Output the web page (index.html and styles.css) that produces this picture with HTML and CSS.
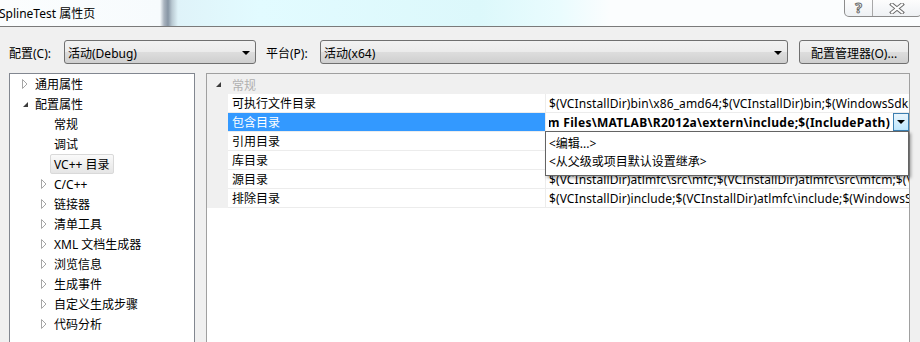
FILE: index.html
```html
<!DOCTYPE html>
<html>
<head>
  <meta charset="utf-8">
  <link rel="stylesheet" href="styles.css">
</head>
<body>
  <div class="titlebar">
    <span class="title">SplineTest 属性页</span>
    <div class="caption-btns">
      <span class="cap cap-help">?</span>
      <span class="cap cap-close">
        <svg width="16" height="11" viewBox="0 0 16 11">
          <path d="M3 1.5L13 9.5M13 1.5L3 9.5" stroke="#6b6b6b" stroke-width="4" stroke-linecap="square"/>
          <path d="M3 1.5L13 9.5M13 1.5L3 9.5" stroke="#fff" stroke-width="2" stroke-linecap="square"/>
        </svg>
      </span>
    </div>
  </div>

  <div class="toolbar">
    <label class="lbl">配置(C):</label>
    <div class="combo combo-config"><span>活动(Debug)</span><i class="arrow"></i></div>
    <label class="lbl lbl-platform">平台(P):</label>
    <div class="combo combo-platform"><span>活动(x64)</span><i class="arrow"></i></div>
    <button type="button" class="btn">配置管理器(O)...</button>
  </div>

  <div class="main">
    <div class="tree">
      <div class="node lvl1">
        <span class="exp"><svg width="6" height="10" viewBox="0 0 6 10"><path d="M0.5 0.5L5 5L0.5 9.5Z" fill="#fff" stroke="#a6a6a6"/></svg></span>
        <span class="text">通用属性</span>
      </div>
      <div class="node lvl1">
        <span class="exp"><svg width="6" height="10" viewBox="0 0 6 10"><path d="M6 3V8H1Z" fill="#3c3c3c"/></svg></span>
        <span class="text">配置属性</span>
      </div>
      <div class="node lvl2"><span class="exp"></span><span class="text">常规</span></div>
      <div class="node lvl2"><span class="exp"></span><span class="text">调试</span></div>
      <div class="node lvl2"><span class="exp"></span><span class="text selected">VC++ 目录</span></div>
      <div class="node lvl2">
        <span class="exp"><svg width="6" height="10" viewBox="0 0 6 10"><path d="M0.5 0.5L5 5L0.5 9.5Z" fill="#fff" stroke="#a6a6a6"/></svg></span>
        <span class="text">C/C++</span>
      </div>
      <div class="node lvl2">
        <span class="exp"><svg width="6" height="10" viewBox="0 0 6 10"><path d="M0.5 0.5L5 5L0.5 9.5Z" fill="#fff" stroke="#a6a6a6"/></svg></span>
        <span class="text">链接器</span>
      </div>
      <div class="node lvl2">
        <span class="exp"><svg width="6" height="10" viewBox="0 0 6 10"><path d="M0.5 0.5L5 5L0.5 9.5Z" fill="#fff" stroke="#a6a6a6"/></svg></span>
        <span class="text">清单工具</span>
      </div>
      <div class="node lvl2">
        <span class="exp"><svg width="6" height="10" viewBox="0 0 6 10"><path d="M0.5 0.5L5 5L0.5 9.5Z" fill="#fff" stroke="#a6a6a6"/></svg></span>
        <span class="text">XML 文档生成器</span>
      </div>
      <div class="node lvl2">
        <span class="exp"><svg width="6" height="10" viewBox="0 0 6 10"><path d="M0.5 0.5L5 5L0.5 9.5Z" fill="#fff" stroke="#a6a6a6"/></svg></span>
        <span class="text">浏览信息</span>
      </div>
      <div class="node lvl2">
        <span class="exp"><svg width="6" height="10" viewBox="0 0 6 10"><path d="M0.5 0.5L5 5L0.5 9.5Z" fill="#fff" stroke="#a6a6a6"/></svg></span>
        <span class="text">生成事件</span>
      </div>
      <div class="node lvl2">
        <span class="exp"><svg width="6" height="10" viewBox="0 0 6 10"><path d="M0.5 0.5L5 5L0.5 9.5Z" fill="#fff" stroke="#a6a6a6"/></svg></span>
        <span class="text">自定义生成步骤</span>
      </div>
      <div class="node lvl2">
        <span class="exp"><svg width="6" height="10" viewBox="0 0 6 10"><path d="M0.5 0.5L5 5L0.5 9.5Z" fill="#fff" stroke="#a6a6a6"/></svg></span>
        <span class="text">代码分析</span>
      </div>
    </div>

    <div class="grid">
      <div class="category">
        <span class="exp"><svg width="6" height="10" viewBox="0 0 6 10"><path d="M6 3V8H1Z" fill="#3c3c3c"/></svg></span>
        <span class="cat-name">常规</span>
      </div>

      <div class="prop">
        <div class="gutter"></div>
        <div class="name">可执行文件目录</div>
        <div class="value">$(VCInstallDir)bin\x86_amd64;$(VCInstallDir)bin;$(WindowsSdkDir)bin\NETFX 4.0 Tools;$(WindowsSdkDir)bin</div>
      </div>
      <div class="prop active">
        <div class="gutter"></div>
        <div class="name">包含目录</div>
        <div class="value">
          <div class="edit"><span>C:\Program Files\MATLAB\R2012a\extern\include;$(IncludePath)</span></div>
          <div class="drop-btn"><i class="arrow"></i></div>
        </div>
      </div>
      <div class="prop">
        <div class="gutter"></div>
        <div class="name">引用目录</div>
        <div class="value">$(VCInstallDir)atlmfc\lib\amd64;$(VCInstallDir)lib\amd64</div>
      </div>
      <div class="prop">
        <div class="gutter"></div>
        <div class="name">库目录</div>
        <div class="value">$(VCInstallDir)lib\amd64;$(VCInstallDir)atlmfc\lib\amd64;$(WindowsSdkDir)lib\x64</div>
      </div>
      <div class="prop">
        <div class="gutter"></div>
        <div class="name">源目录</div>
        <div class="value">$(VCInstallDir)atlmfc\src\mfc;$(VCInstallDir)atlmfc\src\mfcm;$(VCInstallDir)atlmfc\src\atl</div>
      </div>
      <div class="prop">
        <div class="gutter"></div>
        <div class="name">排除目录</div>
        <div class="value">$(VCInstallDir)include;$(VCInstallDir)atlmfc\include;$(WindowsSdkDir)include</div>
      </div>

      <!-- dropdown list of the include row -->
      <div class="popup">
        <div class="item">&lt;编辑...&gt;</div>
        <div class="item">&lt;从父级或项目默认设置继承&gt;</div>
      </div>
    </div>
  </div>
</body>
</html>
```

FILE: styles.css
```css
* {
    box-sizing: border-box;
}

body {
    margin: 0;
    width: 920px;
    height: 342px;
    overflow: hidden;
    background: #f0f0f0;
    font-family: "Segoe UI", "Noto Sans", "Noto Sans CJK SC", sans-serif;
    font-size: 12px;
    color: #000;
}

/* title bar */
.titlebar {
    height: 27px;
    display: flex;
    align-items: flex-start;
    border-bottom: 1px solid #7a7a7a;
    background: linear-gradient(90deg, #fbfdfe 0, #f7fbfd 160px, #aab4bf 164px, #8795a4 168px, #b9c9d2 172px, #dff3f9 178px, #e2fbff 260px, #dcf8fb 480px, #eafcfe 560px, #fbfdfe 610px);
}

.title {
    margin-left: -1px;
    margin-top: 5px;
    line-height: 17px;
}

.caption-btns {
    margin-left: auto;
    margin-right: -2px;
    display: flex;
    height: 17px;
    border: 1px solid #8c8c8c;
    border-top: none;
    border-radius: 0 0 5px 5px;
    background: linear-gradient(#fdfdfd, #eef1f4);
}

.cap {
    display: flex;
    align-items: center;
    justify-content: center;
}

.cap-help {
    width: 28px;
    border-right: 1px solid #a8a8a8;
    font-size: 14px;
    font-weight: bold;
    color: #fff;
    -webkit-text-stroke: 1px #6b6b6b;
    line-height: 16px;
}

.cap-close {
    width: 48px;
}

/* configuration toolbar */
.toolbar {
    display: flex;
    align-items: center;
    height: 24px;
    margin-top: 13px;
    padding-left: 9px;
}

.lbl {
    width: 55px;
    padding-top: 1px;
}

.lbl-platform {
    margin-left: 10px;
    width: 54px;
}

.combo {
    height: 24px;
    display: flex;
    align-items: center;
    padding: 1px 5px 0 3px;
    border: 1px solid #707070;
    border-radius: 3px;
    background: linear-gradient(#f2f2f2 0, #ebebeb 50%, #dddddd 51%, #cfcfcf 100%);
}

.combo span {
    flex: 1;
}

.combo-config {
    width: 192px;
}

.combo-platform {
    width: 468px;
}

.arrow {
    width: 0;
    height: 0;
    border-left: 4px solid transparent;
    border-right: 4px solid transparent;
    border-top: 4px solid #000;
}

.btn {
    margin-left: 11px;
    width: 110px;
    height: 24px;
    padding: 1px 0 0;
    border: 1px solid #707070;
    border-radius: 3px;
    background: linear-gradient(#f2f2f2 0, #ebebeb 50%, #dddddd 51%, #cfcfcf 100%);
    font-family: inherit;
    font-size: 12px;
    color: #000;
}

/* panels */
.main {
    display: flex;
    gap: 11px;
    margin-top: 9px;
    padding-left: 9px;
}

.tree {
    width: 186px;
    height: 300px;
    background: #fff;
    border: 1px solid #828790;
}

.node {
    height: 20px;
    display: flex;
    align-items: center;
}

.lvl1 {
    padding-left: 12px;
}

.lvl2 {
    padding-left: 31px;
}

.exp {
    width: 9px;
    height: 10px;
    display: flex;
}

.text {
    padding: 1px 3px 0;
    height: 20px;
    line-height: 17px;
    border: 1px solid transparent;
    border-radius: 2px;
    white-space: nowrap;
}

.text.selected {
    border-color: #d9d9d9;
    background: linear-gradient(#fafafa, #e5e5e5);
}

/* property grid */
.grid {
    position: relative;
    width: 704px;
    height: 300px;
    background: #fff;
    border: 1px solid #a0a0a0;
}

.category {
    height: 20px;
    display: flex;
    align-items: center;
    padding-left: 8px;
    background: #f0f0f0;
}

.category .exp {
    width: 17px;
}

.cat-name {
    padding-top: 2px;
    color: #b0b0b0;
}

.prop {
    display: flex;
    height: 19px;
}

.gutter {
    width: 21px;
    background: #f0f0f0;
}

.name {
    width: 318px;
    padding: 1px 0 0 4px;
    line-height: 17px;
    border-right: 1px solid #ececec;
    border-bottom: 1px solid #ececec;
    white-space: nowrap;
}

.value {
    width: 363px;
    padding: 1px 0 0 3px;
    line-height: 17px;
    border-bottom: 1px solid #ececec;
    white-space: nowrap;
    overflow: hidden;
    letter-spacing: 0.1px;
}

.prop.active .name {
    background: #3399ff;
    color: #fff;
}

.prop.active .value {
    display: flex;
    padding-top: 0;
}

.edit {
    flex: 1;
    display: flex;
    justify-content: flex-end;
    overflow: hidden;
    padding: 1px 3px 0 0;
    font-weight: bold;
    letter-spacing: 0.3px;
}

.drop-btn {
    width: 16px;
    height: 18px;
    display: flex;
    align-items: center;
    justify-content: center;
    border: 1px solid #3c7fb1;
    background: linear-gradient(#eaf6fd, #bee6fd);
}

/* dropdown list */
.popup {
    position: absolute;
    left: 338px;
    top: 57px;
    width: 364px;
    height: 45px;
    padding-top: 3px;
    background: #fff;
    border: 1px solid #646464;
    box-shadow: 2px 2px 3px rgba(0, 0, 0, 0.35);
}

.item {
    height: 18px;
    line-height: 18px;
    padding-left: 3px;
}
```
